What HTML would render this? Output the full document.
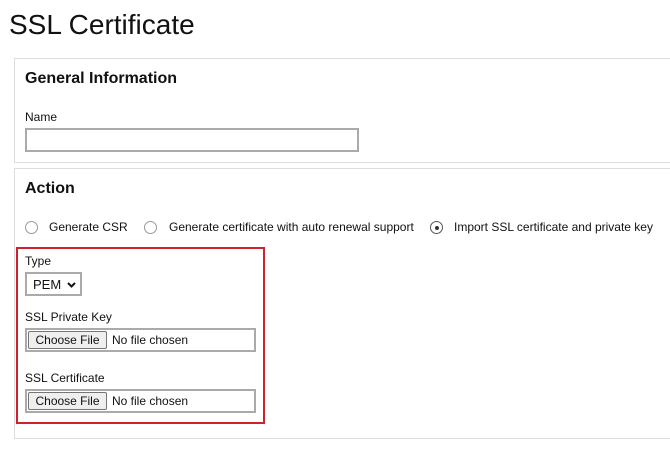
<!DOCTYPE html>
<html><head><style>
body{margin:0;width:670px;height:450px;background:#fff;font-family:"Liberation Sans",Arial,sans-serif;color:#111;position:relative;overflow:hidden}
.a{position:absolute;white-space:nowrap}
.panel{position:absolute;left:14px;width:680px;border:1px solid #ddd;box-sizing:border-box}
.h{font-size:16px;font-weight:bold}
.l{font-size:12px}
.r{position:absolute;width:13px;height:13px;border:1px solid #999;border-radius:50%;box-sizing:border-box}
.fi{position:absolute;left:25px;width:231px;height:24px;border:2px solid #aaa;box-sizing:border-box;font-size:12px}
.btn{position:absolute;left:1px;top:1px;width:79px;height:18px;background:#efefef;border:1px solid #767676;border-radius:2px;box-sizing:border-box;text-align:center;line-height:16px}
</style></head><body>
<div class="a" style="left:9px;top:9px;font-size:28px">SSL Certificate</div>
<div class="panel" style="top:58px;height:105px"></div>
<div class="a h" style="left:25px;top:70px">General Information</div>
<div class="a l" style="left:25px;top:110px">Name</div>
<div class="a" style="left:25px;top:128px;width:334px;height:24px;border:2px solid #aaa;box-sizing:border-box"></div>
<div class="panel" style="top:168px;height:271px"></div>
<div class="a h" style="left:25px;top:180px">Action</div>
<div class="r" style="left:25px;top:221px"></div>
<div class="a l" style="left:49px;top:220px">Generate CSR</div>
<div class="r" style="left:144px;top:221px"></div>
<div class="a l" style="left:169px;top:220px">Generate certificate with auto renewal support</div>
<div class="r" style="left:430px;top:221px;border-color:#555"><div style="position:absolute;left:3.5px;top:3.5px;width:4px;height:4px;border-radius:50%;background:#333"></div></div>
<div class="a l" style="left:454px;top:220px">Import SSL certificate and private key</div>
<div class="a" style="left:16px;top:247px;width:249px;height:177px;border:2px solid #d0202e;box-sizing:border-box"></div>
<div class="a l" style="left:25px;top:254px">Type</div>
<div class="a" style="left:25px;top:272px;width:57px;height:24px;border:2px solid #aaa;box-sizing:border-box;font-size:13px;padding:3px 0 0 6px">PEM
<svg style="position:absolute;left:40px;top:8px" width="9" height="6" viewBox="0 0 9 6"><path d="M1 1L4.5 4.5L8 1" fill="none" stroke="#111" stroke-width="2"/></svg></div>
<div class="a l" style="left:25px;top:310px">SSL Private Key</div>
<div class="fi" style="top:328px"><div class="btn">Choose File</div><span class="a" style="left:85px;top:3px">No file chosen</span></div>
<div class="a l" style="left:25px;top:371px">SSL Certificate</div>
<div class="fi" style="top:389px"><div class="btn">Choose File</div><span class="a" style="left:85px;top:3px">No file chosen</span></div>
</body></html>
